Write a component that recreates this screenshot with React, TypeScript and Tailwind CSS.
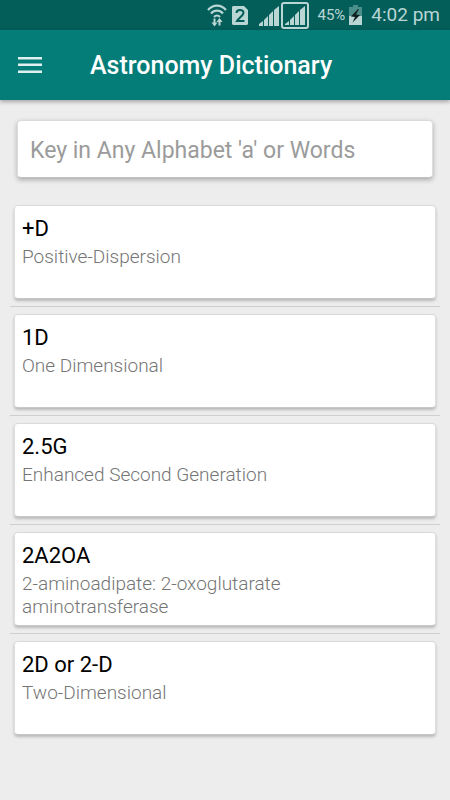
import React from "react";

interface Entry {
  term: string;
  meaning: string;
}

const entries: Entry[] = [
  { term: "+D", meaning: "Positive-Dispersion" },
  { term: "1D", meaning: "One Dimensional" },
  { term: "2.5G", meaning: "Enhanced Second Generation" },
  { term: "2A2OA", meaning: "2-aminoadipate: 2-oxoglutarate aminotransferase" },
  { term: "2D or 2-D", meaning: "Two-Dimensional" },
];

function WifiIcon() {
  return (
    <svg width="20" height="24" viewBox="0 0 20 24" fill="none" stroke="currentColor" aria-hidden="true">
      <path d="M1 7C6 1.200 14 1.200 19 7M4 10.500c3.400-3.800 8.600-3.800 12 0M7 14c1.800-2 4.200-2 6 0" strokeWidth="2.200" />
      <path d="M7.500 15.500v6M12.500 22.500v-6" strokeWidth="2" />
      <path d="M4.500 19.500h6l-3 4zM9.500 19h6l-3-4z" fill="currentColor" stroke="none" />
    </svg>
  );
}

function SimIcon() {
  return (
    <svg width="16" height="19" viewBox="0 0 16 19" fill="none" aria-hidden="true">
      <path d="M1 0h11l4 4v14l-1 1H1l-1-1V1z" fill="currentColor" />
      <path d="M4.500 7C4.500 3 11.500 3 11.500 6.800c0 2.500-4.500 5-6.500 8.200H12.500" stroke="#035d59" strokeWidth="2" />
    </svg>
  );
}

function SignalIcon({ boxed = false }: { boxed?: boolean }) {
  return boxed ? (
    <svg width="28" height="27" viewBox="0 0 28 27" fill="none" aria-hidden="true">
      <rect x="1" y="1" width="26" height="25" rx="2" stroke="currentColor" strokeWidth="2" />
      <path d="M4 23v-1l4-3v4zM9 23v-5l4-4v9zM14 23V13l4-4v14zM19 23V8l5-4v19z" fill="currentColor" />
    </svg>
  ) : (
    <svg width="21" height="27" viewBox="0 0 21 27" aria-hidden="true">
      <path d="M0 24v-2l4-3v5zM5 24v-6l4-4v10zM10 24V13l4-4v15zM15 24V8l5-4v20z" fill="currentColor" />
    </svg>
  );
}

function BatteryIcon() {
  return (
    <svg width="13" height="20" viewBox="0 0 13 20" aria-hidden="true">
      <path d="M4 0h5v2h4v9H0V2h4z" fill="#4b8f8b" />
      <path d="M0 11h13v9H0z" fill="currentColor" />
      <path d="M9 4 2 11.500l4 .5-2.500 5.500L11 10l-4-.5L10 4z" fill="#10201f" />
    </svg>
  );
}

function StatusBar() {
  return (
    <div className="flex h-[30px] items-center justify-end bg-[#035d59] pr-[10px] text-[#b9d6d4]">
      <WifiIcon />
      <span className="ml-[5px]"><SimIcon /></span>
      <span className="ml-[11px]"><SignalIcon /></span>
      <span className="ml-px"><SignalIcon boxed /></span>
      <span className="ml-2 text-[15px]">45%</span>
      <span className="ml-1"><BatteryIcon /></span>
      <span className="ml-[9px] pt-px text-[19px]">4:02 pm</span>
    </div>
  );
}

function EntryCard({ term, meaning }: Entry) {
  return (
    <article className="mx-1 min-h-[94px] rounded-[4px] border border-t-[#dadada] border-x-[#dedede] border-b-[#c8c8c8] bg-white px-[7px] pt-2 pb-1 shadow-[0_2px_3px_rgba(0,0,0,0.22)]">
      <h2 className="text-[22px] leading-[30px] text-black">{term}</h2>
      <p className="max-w-[320px] pt-px text-[19px] leading-[23px] font-light text-[#757575]">{meaning}</p>
    </article>
  );
}

export default function App() {
  return (
    <div className="min-h-screen bg-[#ededed] font-['Roboto','Noto_Sans',sans-serif]">
      <StatusBar />
      <header className="flex h-[70px] items-center bg-[#047d79] pl-[18px] text-white shadow-[0_2px_4px_rgba(0,0,0,0.3)]">
        <button type="button" aria-label="Open menu" className="text-[#dff0ef]">
          <svg width="24" height="18" viewBox="0 0 24 18" fill="currentColor" aria-hidden="true">
            <path d="M0 1h24v2.500H0zM0 7.500h24v2.500H0zM0 14.500h24v2.500H0z" />
          </svg>
        </button>
        <h1 className="ml-12 pt-0.5 text-[25px] font-medium">Astronomy Dictionary</h1>
      </header>
      <main className="px-[10px] pt-5">
        <input
          type="search"
          aria-label="Search the dictionary"
          placeholder="Key in Any Alphabet 'a' or Words"
          className="mx-[7px] block h-[58px] w-[calc(100%-14px)] rounded-[4px] border border-t-[#dadada] border-x-[#dedede] border-b-[#c0c0c0] bg-white px-3 pt-0.5 text-[23px] text-black shadow-[0_2px_5px_rgba(0,0,0,0.28)] outline-none placeholder:text-[#9b9b9b]"
        />
        <ul className="mt-[27px]">
          {entries.map((entry, i) => (
            <li
              key={entry.term}
              className={i < entries.length - 1 ? "mb-[7px] border-b border-[#cfcfcf] pb-[7px]" : ""}
            >
              <EntryCard {...entry} />
            </li>
          ))}
        </ul>
      </main>
    </div>
  );
}
